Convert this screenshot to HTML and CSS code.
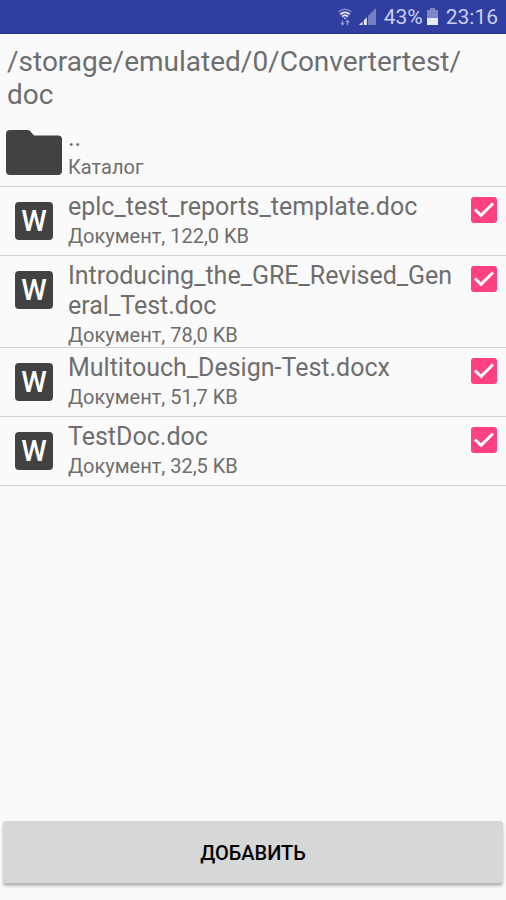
FILE: index.html
```html
<!DOCTYPE html>
<html lang="ru">
<head>
<meta charset="utf-8">
<meta name="viewport" content="width=device-width, initial-scale=1">
<title>Converter</title>
<link rel="stylesheet" href="styles.css">
</head>
<body>
<header class="status">
  <svg class="wifi" viewBox="0 0 14 18" aria-hidden="true"><path d="M.5 4Q7-1.500 13.500 4" fill="none" stroke="currentColor" stroke-width="1.500" opacity=".5"/><path d="M2.200 6.400Q7 2.200 11.800 6.400M4 8.700Q7 6.200 10 8.700" fill="none" stroke="#e8eafa" stroke-width="1.700"/><path d="M5.400 9.700h3.200L7 11.300z" fill="#e8eafa"/><path d="M4.500 12.500v4M3 15l1.500 1.700L6 15M9.500 17v-4M8 14.200l1.500-1.700 1.500 1.700" fill="none" stroke="currentColor" stroke-width="1.400" opacity=".6"/></svg>
  <svg class="signal" viewBox="0 0 17 17" aria-hidden="true"><path d="M17 0v17H9V8z" fill="currentColor" opacity=".45"/><path d="M3.500 13.500V17H0zM7.800 9.200V17H4.800v-4.800z" fill="#e8eafa"/></svg>
  <span>43%</span>
  <svg class="battery" viewBox="0 0 11 17" aria-hidden="true"><path d="M3 0h5v2h3v8H0V2h3z" fill="currentColor" opacity=".5"/><path d="M0 10h11v7H0z" fill="#e8eafa"/></svg>
  <time>23:16</time>
</header>
<main class="content">
  <h1 class="path">/storage/emulated/0/Convertertest/<wbr>doc</h1>
  <ul class="files">
    <li class="row folder">
      <svg class="folder-icon" viewBox="0 0 56 45" aria-hidden="true"><path d="M4 0h18q1 0 2 1l4 4.500h24q4 0 4 4V41q0 4-4 4H4q-4 0-4-4V4q0-4 4-4z" fill="#424242"/></svg>
      <a class="info" href="#"><span class="name">..</span><span class="meta">Каталог</span></a>
    </li>
    <li class="row">
      <span class="doc-icon" aria-hidden="true">W</span>
      <label class="info" for="f1"><span class="name">eplc_test_reports_template.doc</span><span class="meta">Документ, 122,0 KB</span></label>
      <span class="box"><input class="check" id="f1" type="checkbox" checked><svg class="tick" viewBox="0 0 26 26" aria-hidden="true"><path d="M4 12.500l6 5.800L22 6.500"/></svg></span>
    </li>
    <li class="row">
      <span class="doc-icon" aria-hidden="true">W</span>
      <label class="info" for="f2"><span class="name">Introducing_the_GRE_Revised_Gen<wbr>eral_Test.doc</span><span class="meta">Документ, 78,0 KB</span></label>
      <span class="box"><input class="check" id="f2" type="checkbox" checked><svg class="tick" viewBox="0 0 26 26" aria-hidden="true"><path d="M4 12.500l6 5.800L22 6.500"/></svg></span>
    </li>
    <li class="row">
      <span class="doc-icon" aria-hidden="true">W</span>
      <label class="info" for="f3"><span class="name">Multitouch_Design-Test.docx</span><span class="meta">Документ, 51,7 KB</span></label>
      <span class="box"><input class="check" id="f3" type="checkbox" checked><svg class="tick" viewBox="0 0 26 26" aria-hidden="true"><path d="M4 12.500l6 5.800L22 6.500"/></svg></span>
    </li>
    <li class="row">
      <span class="doc-icon" aria-hidden="true">W</span>
      <label class="info" for="f4"><span class="name">TestDoc.doc</span><span class="meta">Документ, 32,5 KB</span></label>
      <span class="box"><input class="check" id="f4" type="checkbox" checked><svg class="tick" viewBox="0 0 26 26" aria-hidden="true"><path d="M4 12.500l6 5.800L22 6.500"/></svg></span>
    </li>
  </ul>
</main>
<footer class="actions"><button class="add" type="button">ДОБАВИТЬ</button></footer>
</body>
</html>
```

FILE: styles.css
```css
* { box-sizing: border-box; }
body {
  margin: 0;
  min-height: 100vh;
  display: flex;
  flex-direction: column;
  background: #fafafa;
  color: #6e6e6e;
  font-family: Roboto, "Noto Sans", sans-serif;
}
.status {
  height: 34px;
  padding: 0 8px;
  display: flex;
  align-items: center;
  justify-content: flex-end;
  background: #303f9f;
  border-bottom: 1px solid #283583;
  color: #c9cff5;
  font-size: 21px;
}
.wifi { width: 14px; height: 18px; margin-right: 7px; }
.signal { width: 17px; height: 17px; margin-right: 8px; }
.battery { width: 11px; height: 17px; margin: 0 8px 0 4px; }
.content { flex: 1; }
.path {
  margin: 0;
  padding: 11px 7px 7px;
  font-size: 28px;
  line-height: 33px;
  font-weight: 400;
}
.files { margin: 0; padding: 0; list-style: none; }
.row {
  display: flex;
  align-items: flex-start;
  min-height: 69px;
  padding: 5px 9px 0 15px;
  border-bottom: 1px solid #d3d3d3;
}
.folder { padding-left: 6px; }
.folder-icon { width: 56px; height: 45px; margin: 7px 6px 0 0; }
.doc-icon {
  flex: none;
  width: 38px;
  height: 38px;
  margin: 10px 15px 0 0;
  border-radius: 4px;
  background: #424242;
  color: #fff;
  font-size: 29px;
  line-height: 38px;
  font-weight: 500;
  text-align: center;
}
.info { flex: 1; min-width: 0; color: inherit; text-decoration: none; }
.name, .meta { display: block; }
.name { font-size: 25px; line-height: 30px; }
.meta { padding-top: 2px; font-size: 20px; line-height: 24px; }
.box {
  flex: none;
  display: grid;
  width: 26px;
  height: 26px;
  margin-top: 5px;
}
.check, .tick { grid-area: 1 / 1; width: 26px; height: 26px; }
.check {
  appearance: none;
  margin: 0;
  border-radius: 3px;
}
.check:checked { background: #ff4081; }
.tick {
  visibility: hidden;
  pointer-events: none;
  fill: none;
  stroke: #fff;
  stroke-width: 3;
}
.check:checked + .tick { visibility: visible; }
.actions { padding: 0 3px 17px; }
.add {
  display: block;
  width: 100%;
  height: 62px;
  padding: 2px 0 0;
  border: 0;
  border-radius: 3px;
  background: #d6d7d7;
  color: #000;
  font: 500 20px Roboto, sans-serif;
  box-shadow: 0 3px 3px #00000048;
}
```
